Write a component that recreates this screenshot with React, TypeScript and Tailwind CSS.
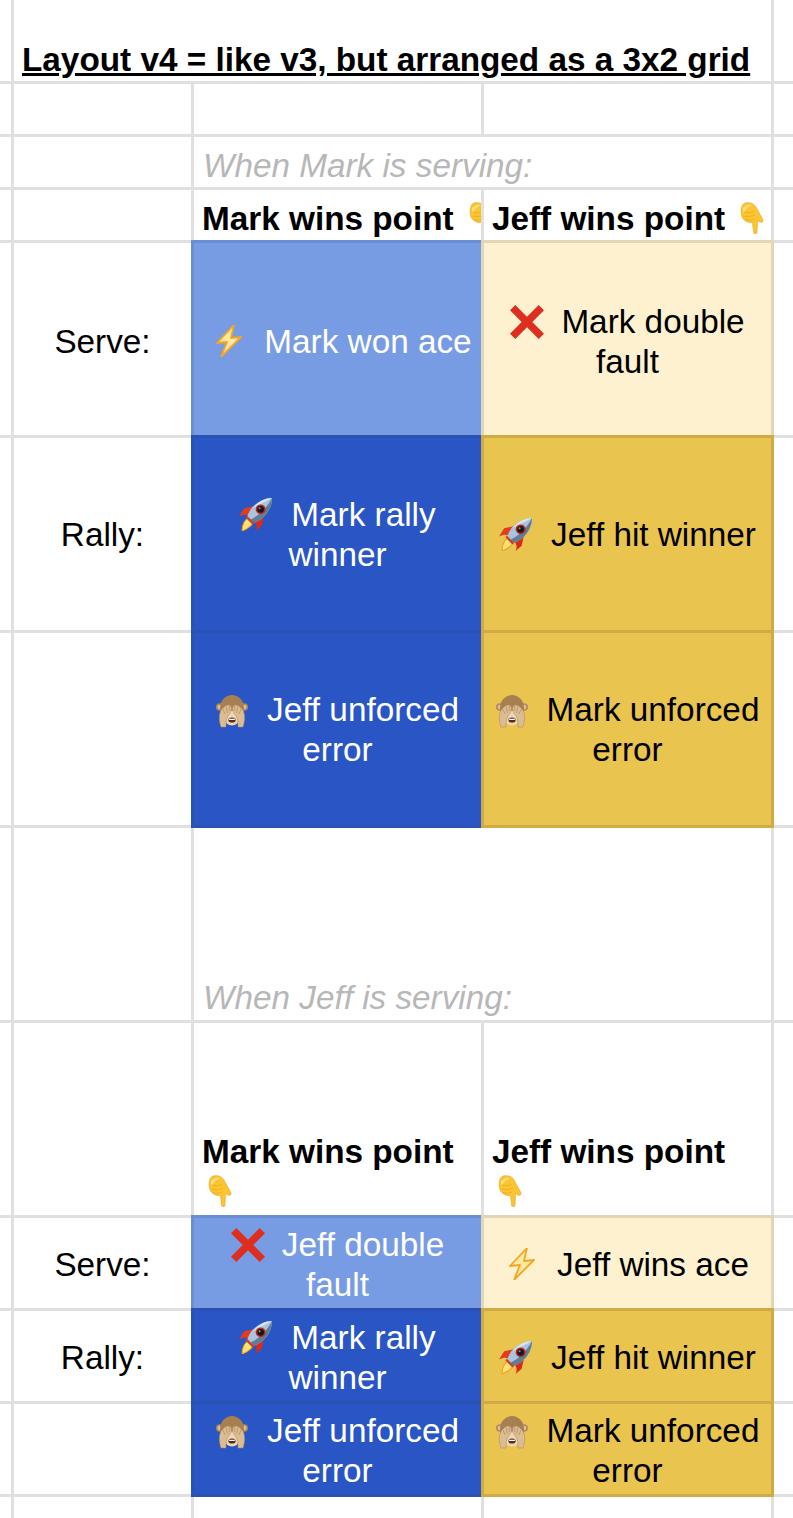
import React from "react";

const Bolt = () => (
  <svg viewBox="0 0 32 32" className="inline-block w-[32px] h-[32px] align-[-4px] mr-[19px]">
    <path d="M21 0 L4 18 L14 17 L8 32 L28 12 L18 13 Z" fill="#fde9a0" stroke="#f5a524" strokeWidth="1.8" strokeLinejoin="round" />
  </svg>
);

const Cross = () => (
  <svg viewBox="0 0 32 32" className="inline-block w-[34px] h-[34px] align-[-6px] mr-[17px]">
    <path d="M5 0 L16 11 L27 0 L32 5 L21 16 L32 27 L27 32 L16 21 L5 32 L0 27 L11 16 L0 5 Z" fill="#dd2e1f" />
  </svg>
);

const Rocket = () => (
  <svg viewBox="0 0 32 32" className="inline-block w-[33px] h-[33px] align-[-5px] mr-[19px]">
    <path d="M3 32 C3 27 5 22 8 20 L13 25 C11 28 8 30 3 32 Z" fill="#fde27a" stroke="#f59e0b" strokeWidth="1" />
    <path d="M14 8 L5 10 L0 18 C4 16 7 16 9 17 Z" fill="#e33b1c" />
    <path d="M24 18 L22 27 L16 32 C18 28 17 25 15 23 Z" fill="#d92c18" />
    <path d="M32 0 C25 0 17 4 12 10 C10 13 9 15 8 18 L14 24 C17 23 19 22 22 20 C28 15 32 8 32 0 Z" fill="#a9c4dc" />
    <path d="M32 0 C25 0 18 4 13 10 C18 7 25 4 32 0 Z" fill="#d8e6f0" />
    <path d="M11 21 C18 18 27 10 32 0 C32 8 28 15 22 20 C19 22 17 23 14 24 Z" fill="#5f7d99" />
    <circle cx="21" cy="11" r="4.8" fill="#c4281c" />
    <circle cx="21" cy="11" r="3.3" fill="#17171c" />
    <circle cx="20" cy="10" r="1" fill="#8b939c" />
    <path d="M7 18 L14 25" stroke="#c9432a" strokeWidth="2.2" />
  </svg>
);

const Monkey = () => (
  <svg viewBox="0 0 32 32" className="inline-block w-[32px] h-[34px] align-[-7px] mr-[19px]">
    <circle cx="3.8" cy="12" r="3.8" fill="#b08a5e" />
    <circle cx="28.2" cy="12" r="3.8" fill="#b08a5e" />
    <circle cx="3.8" cy="12" r="2.2" fill="#e7b9a0" />
    <circle cx="28.2" cy="12" r="2.2" fill="#e7b9a0" />
    <ellipse cx="16" cy="13" rx="12" ry="13" fill="#a87f50" />
    <ellipse cx="16" cy="23" rx="7.5" ry="7.5" fill="#ecd6b4" />
    <ellipse cx="16" cy="25" rx="3.6" ry="2.6" fill="#5a2a18" />
    <path d="M12.8 23.8 L19.2 23.8 L18.6 25 L13.4 25 Z" fill="#fff" />
    <path d="M5 32 C3 26 2 17 7 13 C10 9 15 9 15.5 13 C16 17 12 20 11 23 C10 26 10 29 10 32 Z" fill="#dcbc92" stroke="#a68458" strokeWidth="0.5" />
    <path d="M27 32 C29 26 30 17 25 13 C22 9 17 9 16.5 13 C16 17 20 20 21 23 C22 26 22 29 22 32 Z" fill="#dcbc92" stroke="#a68458" strokeWidth="0.5" />
    <path d="M7 14 L9 19 M10 11.5 L11.5 18 M13 11 L13.5 16 M25 14 L23 19 M22 11.5 L20.5 18 M19 11 L18.5 16" stroke="#a68458" strokeWidth="0.6" />
  </svg>
);

const Hand = () => (
  <svg viewBox="0 0 32 32" className="inline-block w-[32px] h-[32px] align-[-4px]">
    <path d="M11 1 C15 0 20 1 22 5 C24 9 27 14 29 18 C29.5 20.5 27 21 25 19.5 L23.5 18.5 L23 30 C23 32.5 19.5 32.5 19.5 30 L18.5 20.5 C13 21 8.5 18 7.5 13 C6.5 8 7.5 2 11 1 Z" fill="#fbc531" stroke="#eaa31e" strokeWidth="0.6" />
    <path d="M9 6 C12 3 15 2 18 3 C14 5 11 8 9 12 Z" fill="#ffdd77" />
    <path d="M9 10 C12 11 16 11 20 9.5 M9.5 14 C12 15 16 15 21 13 M11 17.5 C14 18.5 16 18.5 20 17" stroke="#e8a317" strokeWidth="0.6" fill="none" />
  </svg>
);

const line = "border-r-[3px] border-b-[3px] border-[#e0e0e0]";

const Blank = () => <div className={line} />;
const End = () => <div className="border-b-[3px] border-[#e0e0e0]" />;

const Label = ({ children, top = "pt-[2px]" }: { children?: React.ReactNode; top?: string }) => (
  <div className={`${line} flex items-center justify-center ${top} text-black`}>{children}</div>
);

const Note = ({ children, bottom }: { children: React.ReactNode; bottom: string }) => (
  <div className={`${line} col-span-2 flex items-end px-[8px] ${bottom} whitespace-nowrap italic text-[#b7b7b7]`}>
    <span className="pl-[1px]">{children}</span>
  </div>
);

const Head = ({ children, wrap }: { children: string; wrap?: boolean }) => (
  <div className={`${line} flex items-end overflow-hidden pl-[8px] ${wrap ? "pb-[3px]" : "pb-[1px]"} font-bold text-black`}>
    <div className={wrap ? "pr-[8px]" : "whitespace-nowrap"}>
      {children} <Hand />
    </div>
  </div>
);

const tones = {
  sky: "bg-[#789ce4] border-[#6b8dd2] text-white",
  blue: "bg-[#2a55c5] border-[#2a51b4] text-white",
  cream: "bg-[#fdf1cf] border-[#e2d6b6] text-black",
  gold: "bg-[#e9c44f] border-[#cfab45] text-black",
};

const Fill = ({
  tone,
  icon,
  children,
  pad = "pl-[8px] pr-[8px] pt-[1px]",
}: {
  tone: keyof typeof tones;
  icon: React.ReactNode;
  children: string;
  pad?: string;
}) => (
  <div className={`-ml-[3px] -mt-[3px] border-[3px] flex items-center justify-center text-center ${pad} ${tones[tone]}`}>
    <div>
      {icon}
      {children}
    </div>
  </div>
);

const small = "pl-[8px] pr-[8px] pt-[3px]";

export default function App() {
  return (
    <div
      className="grid h-[1518px] w-[793px] overflow-hidden bg-white grid-cols-[14px_180px_290px_290px_19px] grid-rows-[84px_53px_53px_53px_195px_195px_195px_195px_195px_93px_93px_93px_21px] text-[33.3px] leading-[40px]"
      style={{ fontFamily: '"Liberation Sans", Arial, sans-serif' }}
    >
      <Blank />
      <div className={`${line} col-span-3 flex items-end pl-[8px] pb-[1px] whitespace-nowrap font-bold underline text-black`}>
        Layout v4 = like v3, but arranged as a 3x2 grid
      </div>
      <End />

      <Blank /><Blank /><Blank /><Blank /><End />

      <Blank /><Blank /><Note bottom="pb-[1px]">When Mark is serving:</Note><End />

      <Blank /><Blank /><Head>Mark wins point</Head><Head>Jeff wins point</Head><End />

      <Blank /><Label top="pt-[6px]">Serve:</Label>
      <Fill tone="sky" icon={<Bolt />} pad="pl-[10px] pr-0 pt-[5px]">Mark won ace</Fill>
      <Fill tone="cream" icon={<Cross />} pad="pl-[8px] pr-[8px] pt-[5px]">Mark double fault</Fill>
      <End />

      <Blank /><Label>Rally:</Label>
      <Fill tone="blue" icon={<Rocket />}>Mark rally winner</Fill>
      <Fill tone="gold" icon={<Rocket />}>Jeff hit winner</Fill>
      <End />

      <Blank /><Label />
      <Fill tone="blue" icon={<Monkey />}>Jeff unforced error</Fill>
      <Fill tone="gold" icon={<Monkey />}>Mark unforced error</Fill>
      <End />

      <Blank /><Blank /><Note bottom="pb-[2px]">When Jeff is serving:</Note><End />

      <Blank /><Blank /><Head wrap>Mark wins point</Head><Head wrap>Jeff wins point</Head><End />

      <Blank /><Label top="pt-[4px]">Serve:</Label>
      <Fill tone="sky" icon={<Cross />} pad={small}>Jeff double fault</Fill>
      <Fill tone="cream" icon={<Bolt />} pad={small}>Jeff wins ace</Fill>
      <End />

      <Blank /><Label top="pt-[4px]">Rally:</Label>
      <Fill tone="blue" icon={<Rocket />} pad={small}>Mark rally winner</Fill>
      <Fill tone="gold" icon={<Rocket />} pad={small}>Jeff hit winner</Fill>
      <End />

      <Blank /><Label />
      <Fill tone="blue" icon={<Monkey />} pad={small}>Jeff unforced error</Fill>
      <Fill tone="gold" icon={<Monkey />} pad={small}>Mark unforced error</Fill>
      <End />

      <div className="border-r-[3px] border-[#e0e0e0]" />
      <div className="border-r-[3px] border-[#e0e0e0]" />
      <div className="border-r-[3px] border-[#e0e0e0]" />
      <div className="border-r-[3px] border-[#e0e0e0]" />
      <div />
    </div>
  );
}
